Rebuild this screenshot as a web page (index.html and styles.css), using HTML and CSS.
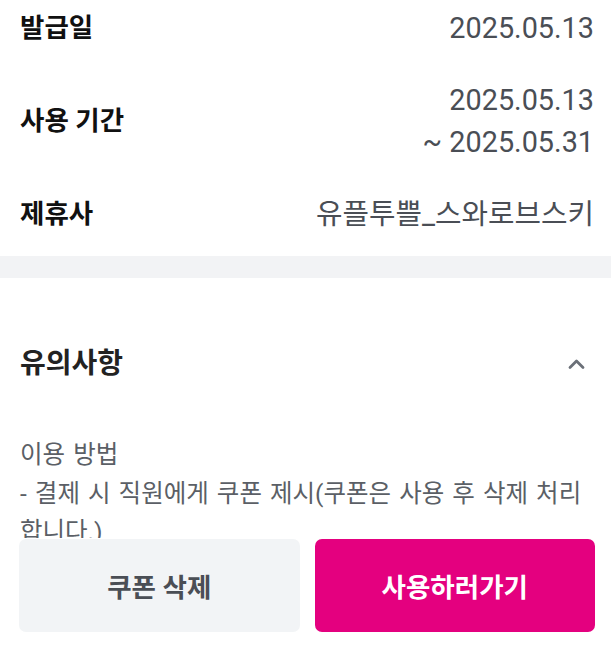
FILE: index.html
```html
<!DOCTYPE html>
<html lang="ko">
<head>
  <meta charset="UTF-8" />
  <meta name="viewport" content="width=device-width, initial-scale=1.0"/>
  <title>쿠폰 상세</title>
  <link rel="stylesheet" href="styles.css">
</head>
<body>
  <section class="info">
    <div class="row">
      <span class="label">발급일</span>
      <span class="value">2025.05.13</span>
    </div>
    <div class="row">
      <span class="label">사용 기간</span>
      <span class="value">2025.05.13<br>~ 2025.05.31</span>
    </div>
    <div class="row">
      <span class="label">제휴사</span>
      <span class="value">유플투쁠_스와로브스키</span>
    </div>
  </section>

  <div class="divider"></div>

  <section class="notice">
    <div class="notice-head">
      <h2>유의사항</h2>
      <svg class="chevron" width="17" height="12" viewBox="0 0 17 12">
        <path d="M2 9.5 L8.5 3 L15 9.5" fill="none" stroke="#6b7078" stroke-width="2.8" stroke-linecap="round" stroke-linejoin="round"/>
      </svg>
    </div>
    <p class="notice-body">
      이용 방법<br>
      - 결제 시 직원에게 쿠폰 제시(쿠폰은 사용 후 삭제 처리 합니다.)
    </p>
  </section>

  <div class="actions">
    <button class="btn btn-gray">쿠폰 삭제</button>
    <button class="btn btn-primary">사용하러가기</button>
  </div>
</body>
</html>
```

FILE: styles.css
```css
* {
  box-sizing: border-box;
}

body {
  margin: 0;
  font-family: Roboto, "Noto Sans CJK KR", sans-serif;
  background: white;
  color: #111;
}

.info {
  display: flex;
  flex-direction: column;
  gap: 30px;
  padding: 7px 17px 21px 20px;
}

.row {
  display: flex;
  justify-content: space-between;
  align-items: center;
}

.label {
  font-size: 26.5px;
  font-weight: 700;
  line-height: 42px;
  color: #111;
}

.value {
  font-size: 28.8px;
  line-height: 42px;
  text-align: right;
  color: #4a4e55;
}

.divider {
  height: 22px;
  background: #f2f3f5;
}

.notice {
  padding: 69px 17px 160px 20px;
}

.notice-head {
  display: flex;
  justify-content: space-between;
  align-items: center;
}

.notice-head h2 {
  margin: 0;
  font-size: 28px;
  font-weight: 700;
  line-height: 34px;
  color: #222;
}

.chevron {
  margin-right: 9px;
}

.notice-body {
  margin: 55px 0 0;
  font-size: 24.5px;
  line-height: 38.5px;
  word-spacing: 2px;
  word-break: keep-all;
  color: #5b5f66;
}

/* bottom bar */
.actions {
  position: fixed;
  left: 0;
  right: 0;
  bottom: 0;
  display: flex;
  gap: 15px;
  padding: 1px 16px 28px 19px;
  background: white;
}

.btn {
  flex: 1;
  height: 93px;
  border: none;
  border-radius: 7px;
  font-family: inherit;
  font-size: 26.5px;
  font-weight: 700;
}

.btn-gray {
  background: #f2f4f6;
  color: #4a4e55;
}

.btn-primary {
  background: #e4007f;
  color: white;
}
```
